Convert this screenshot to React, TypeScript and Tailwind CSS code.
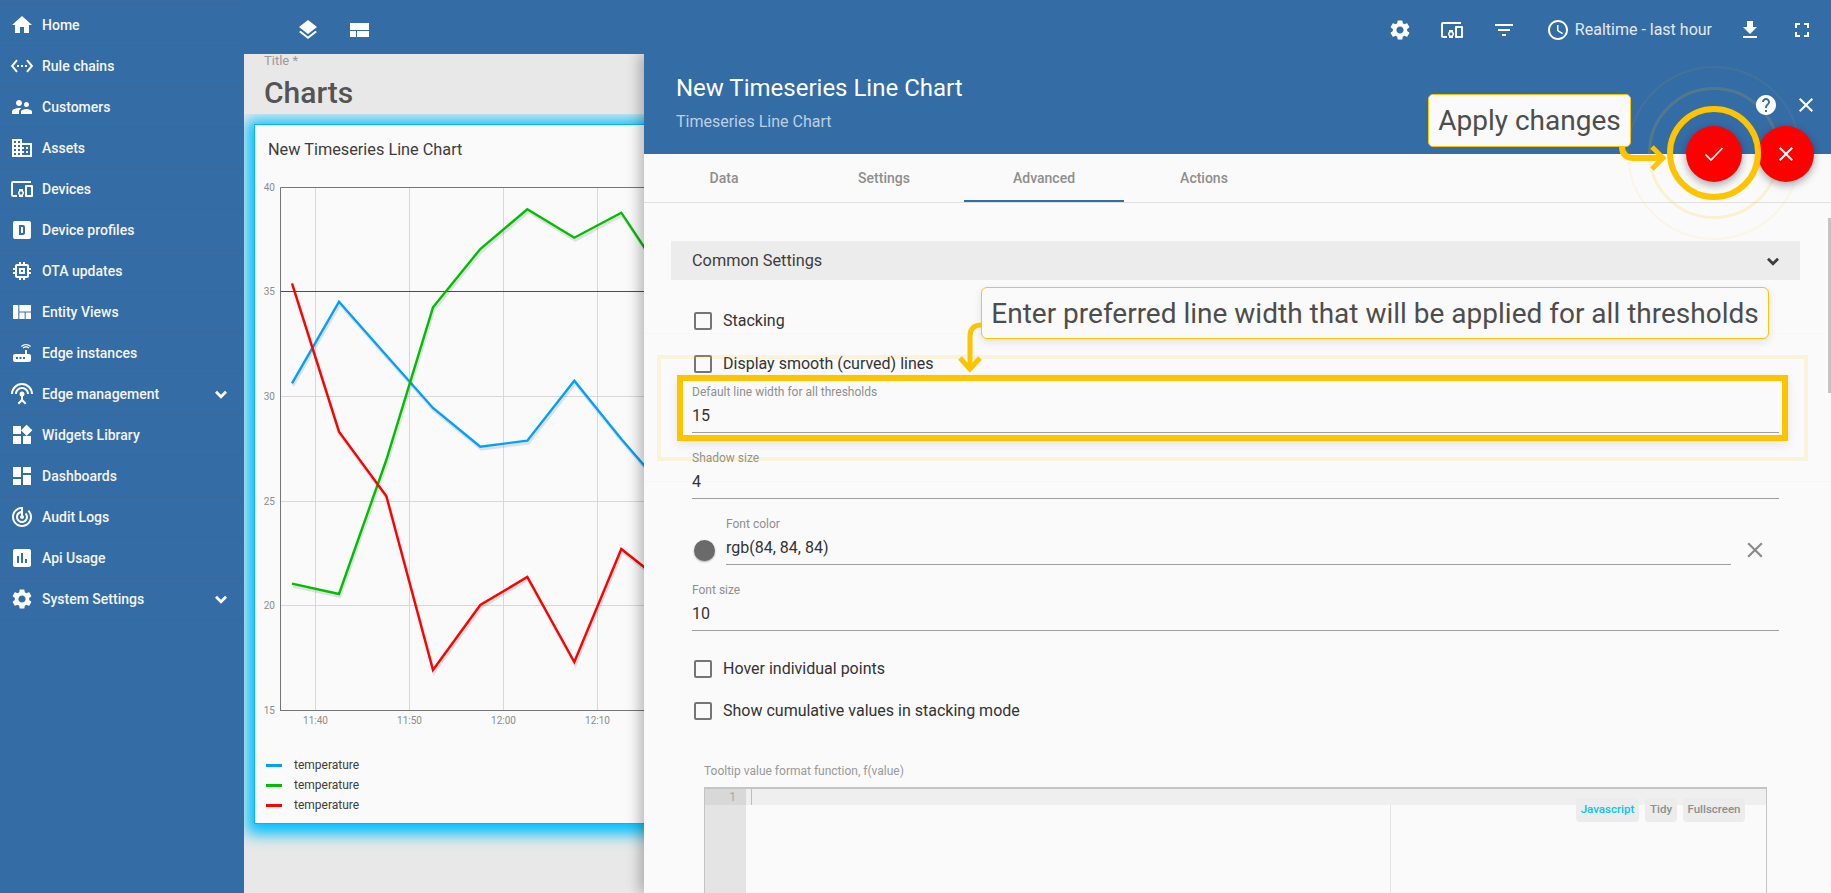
import { ReactNode } from 'react';
import {
  MdAccessTime,
  MdAssessment,
  MdClose,
  MdDashboard,
  MdDevicesOther,
  MdDomain,
  MdFilterList,
  MdFullscreen,
  MdGetApp,
  MdHelp,
  MdHome,
  MdLayers,
  MdMemory,
  MdRouter,
  MdSettings,
  MdSettingsEthernet,
  MdSettingsInputAntenna,
  MdSupervisorAccount,
  MdTrackChanges,
  MdViewQuilt,
  MdWidgets,
} from 'react-icons/md';

function DeviceProfileIcon() {
  return (
    <svg width="24" height="24" viewBox="0 0 24 24" fill="currentColor">
      <path
        fillRule="evenodd"
        d="M9 7v10h4a2 2 0 0 0 2-2V9a2 2 0 0 0-2-2H9zm2 2h2v6h-2V9zM5 3h14a2 2 0 0 1 2 2v14a2 2 0 0 1-2 2H5a2 2 0 0 1-2-2V5a2 2 0 0 1 2-2z"
      />
    </svg>
  );
}

function LayoutIcon() {
  return (
    <svg width="24" height="24" viewBox="0 0 24 24" fill="currentColor">
      <path d="M2 5h19v7H2zM2 13h6v6H2zM9 13h12v6H9z" />
    </svg>
  );
}

function Chevron({ className = '' }: { className?: string }) {
  return (
    <svg width="24" height="24" viewBox="0 0 24 24" fill="none" stroke="currentColor" strokeWidth="2.800" className={className}>
      <path d="M7 9.800l5 5 5-5" />
    </svg>
  );
}

const menu: { label: string; icon: ReactNode; more?: boolean }[] = [
  { label: 'Home', icon: <MdHome size={24} /> },
  { label: 'Rule chains', icon: <MdSettingsEthernet size={24} /> },
  { label: 'Customers', icon: <MdSupervisorAccount size={24} /> },
  { label: 'Assets', icon: <MdDomain size={24} /> },
  { label: 'Devices', icon: <MdDevicesOther size={24} /> },
  { label: 'Device profiles', icon: <DeviceProfileIcon /> },
  { label: 'OTA updates', icon: <MdMemory size={24} /> },
  { label: 'Entity Views', icon: <MdViewQuilt size={24} /> },
  { label: 'Edge instances', icon: <MdRouter size={24} /> },
  { label: 'Edge management', icon: <MdSettingsInputAntenna size={24} />, more: true },
  { label: 'Widgets Library', icon: <MdWidgets size={24} /> },
  { label: 'Dashboards', icon: <MdDashboard size={24} /> },
  { label: 'Audit Logs', icon: <MdTrackChanges size={24} /> },
  { label: 'Api Usage', icon: <MdAssessment size={24} /> },
  { label: 'System Settings', icon: <MdSettings size={24} />, more: true },
];

function Sidebar() {
  return (
    <aside className="w-[244px] shrink-0 bg-[#346ca6] pt-[4px] text-[#f5f5f5]">
      <div className="border-t border-[#39689b]">
        {menu.map((item) => (
          <div key={item.label} className="flex h-[41px] items-center border-b border-[#39689b] pl-[10px] pr-[11px]">
            <span className="flex w-[24px] justify-center text-white">{item.icon}</span>
            <span className="ml-[8px] flex-1 text-[14px] font-medium">{item.label}</span>
            {item.more && <Chevron className="text-white" />}
          </div>
        ))}
      </div>
    </aside>
  );
}

function Toolbar() {
  return (
    <header className="flex h-[54px] shrink-0 items-center bg-[#346ca6] pt-[6px] text-white">
      <div className="ml-[52px] flex gap-[28px]">
        <MdLayers size={24} />
        <LayoutIcon />
      </div>
      <div className="ml-auto mr-[17px] flex items-center">
        <MdSettings size={24} />
        <MdDevicesOther size={24} className="ml-[28px]" />
        <MdFilterList size={24} className="ml-[28px]" />
        <MdAccessTime size={24} className="ml-[30px]" />
        <span className="ml-[5px] text-[16px] text-[#e3e9f1]">Realtime - last hour</span>
        <MdGetApp size={24} className="ml-[26px]" />
        <MdFullscreen size={24} className="ml-[28px]" />
      </div>
    </header>
  );
}

const gridX = [315.5, 409.5, 503.5, 597.5, 691.5];
const gridY = [396.5, 501.5, 605.5];
const timeLabels = ['11:40', '11:50', '12:00', '12:10', '12:20'];

const series = [
  {
    color: '#00a0ff',
    points: '292,383.300 339,301.700 386,355 433,408 480.300,446.700 527.300,440.700 574.300,380.700 621.300,439 668,493',
  },
  {
    color: '#00bf00',
    points: '292,583.700 339,594 386.300,460 433,307.300 480.300,249 527.300,209.300 574.300,237.700 621.300,212.700 668,283',
  },
  {
    color: '#ff0000',
    points: '292,283.300 339,431.700 386.300,496 433,670 480.300,605 527.300,577 574.300,662 621.300,549 668,586',
  },
];

function LineChart() {
  return (
    <svg width="800" height="580" viewBox="255 170 800 580" className="block">
      {gridX.map((x) => (
        <line key={x} x1={x} x2={x} y1={187} y2={710} stroke="#d8d8d8" strokeWidth="1" />
      ))}
      {gridY.map((y) => (
        <line key={y} x1={281} x2={1055} y1={y} y2={y} stroke="#d8d8d8" strokeWidth="1" />
      ))}
      <line x1={281} x2={1055} y1={291.5} y2={291.5} stroke="#d01515" strokeWidth="1" />
      <path d="M280.500 711V187.500H1055M280.500 710.500H1055" fill="none" stroke="#757575" strokeWidth="1" />
      {series.map((s) => (
        <g key={s.color} fill="none" strokeLinejoin="miter">
          <polyline points={s.points} stroke="rgba(0,0,0,0.1)" strokeWidth="3" transform="translate(1 2.5)" />
          <polyline points={s.points} stroke={s.color} strokeWidth="2.4" />
        </g>
      ))}
      <g fontSize="10" fill="#8c8c8c" fontFamily="Roboto, sans-serif">
        {[
          [40, 191],
          [35, 295],
          [30, 400],
          [25, 505],
          [20, 609],
          [15, 714],
        ].map(([v, y]) => (
          <text key={v} x={275} y={y} textAnchor="end">
            {v}
          </text>
        ))}
        {timeLabels.map((t, i) => (
          <text key={t} x={gridX[i]} y={724} textAnchor="middle">
            {t}
          </text>
        ))}
      </g>
    </svg>
  );
}

function WidgetCard() {
  const legend = ['#00a0ff', '#00bf00', '#ff0000'];
  return (
    <div className="h-[700px] w-[800px] border border-[#00b8ff] bg-[#fafafa] shadow-[0_3px_14px_7px_#00bfff]">
      <div className="flex h-[45px] items-end pb-[8px] pl-[13px] text-[16.3px] leading-[24px] text-[#3d3d3d]">
        New Timeseries Line Chart
      </div>
      <LineChart />
      <div className="mt-[5px] pl-[11px]">
        {legend.map((color) => (
          <div key={color} className="flex h-[20px] items-center">
            <span className="h-[3px] w-[16px]" style={{ backgroundColor: color }} />
            <span className="ml-[12px] text-[12px] text-[#3d3d3d]">temperature</span>
          </div>
        ))}
      </div>
    </div>
  );
}

function Checkbox({ label, className }: { label: string; className: string }) {
  return (
    <div className={`flex h-[24px] items-center pl-[2px] ${className}`}>
      <span className="h-[18px] w-[18px] rounded-[2px] border-2 border-[#757575]" />
      <span className="ml-[11px] text-[16px] text-[#333]">{label}</span>
    </div>
  );
}

function Field({ label, value, className = '' }: { label: string; value: string; className?: string }) {
  return (
    <div className={`h-[48px] ${className}`}>
      <div className="h-[14px] text-[12px] leading-[14px] text-[#8f8f8f]">{label}</div>
      <div className="mt-[5px] h-[24px] text-[16px] leading-[24px] text-[#333]">{value}</div>
      <div className="mt-[4px] h-px bg-[#9e9e9e]" />
    </div>
  );
}

function CodeEditor() {
  return (
    <div className="relative mx-[12px] mt-[9px] flex h-[120px] border border-t-2 border-[#c4c4c4] bg-[#fafafa]">
      <div className="w-[41px] bg-[#e4e4e4]">
        <div className="h-[16px] bg-[#d8d8d8] pr-[10px] text-right text-[12px] leading-[16px] text-[#a8a8a8]">1</div>
      </div>
      <div className="relative flex-1">
        <div className="h-[16px] bg-[#efefef]">
          <div className="ml-[5px] h-full w-px bg-[#bdbdbd]" />
        </div>
        <div className="ml-[644px] h-full w-px bg-[#e4e4e4]" />
      </div>
      <div className="absolute right-[21px] top-[9px] flex items-start gap-[6px] text-[11.5px] font-medium text-[#8f8f8f]">
        <span className="flex h-[24px] w-[63px] items-center justify-center rounded-[4px] bg-[#ececec] text-[#00c8e6]">
          Javascript
        </span>
        <span className="flex h-[24px] w-[32px] items-center justify-center rounded-[4px] bg-[#ececec]">Tidy</span>
        <span className="flex h-[24px] w-[62px] items-center justify-center rounded-[4px] bg-[#ececec]">
          Fullscreen
        </span>
      </div>
    </div>
  );
}

function AdvancedForm() {
  return (
    <div className="mx-[27px] mt-[38px] w-[1129px] bg-[#fafafa] pb-[40px]">
      <div className="flex h-[39px] items-center justify-between bg-[#ececec] px-[21px] text-[#3d3d3d]">
        <span className="pt-[2px] text-[16.3px]">Common Settings</span>
        <Chevron className="mr-[-6px]" />
      </div>
      <div className="px-[21px]">
        <Checkbox label="Stacking" className="mt-[29px]" />
        <Checkbox label="Display smooth (curved) lines" className="mt-[19px]" />
        <Field label="Default line width for all thresholds" value="15" className="mt-[9px]" />
        <Field label="Shadow size" value="4" className="mt-[18px]" />
        <div className="mt-[18px] flex h-[48px]">
          <span className="ml-[2px] mt-[23px] h-[21px] w-[21px] rounded-full bg-[#6a6a6a] shadow-[0_1px_2px_rgba(0,0,0,0.35)]" />
          <Field label="Font color" value="rgb(84, 84, 84)" className="ml-[11px] flex-1" />
          <MdClose size={26} className="ml-[11px] mr-[11px] mt-[20px] text-[#8a8a8a]" />
        </div>
        <Field label="Font size" value="10" className="mt-[18px]" />
        <Checkbox label="Hover individual points" className="mt-[26px]" />
        <Checkbox label="Show cumulative values in stacking mode" className="mt-[18px]" />
        <div className="ml-[12px] mt-[41px] h-[14px] text-[12px] leading-[14px] text-[#999]">
          Tooltip value format function, f(value)
        </div>
        <CodeEditor />
      </div>
    </div>
  );
}

function EditPanel() {
  const tabs = ['Data', 'Settings', 'Advanced', 'Actions'];
  return (
    <div className="pointer-events-none absolute bottom-0 left-[244px] right-0 top-[54px] overflow-hidden">
      <section className="absolute bottom-0 left-[400px] right-0 top-0 overflow-hidden bg-[#fafafa] shadow-[-5px_0_12px_rgba(0,0,0,0.25)]">
        <div className="h-[100px] bg-[#346ca6] pl-[32px] pt-[19px]">
          <div className="text-[24px] leading-[30px] text-white">New Timeseries Line Chart</div>
          <div className="mt-[7px] text-[16px] leading-[24px] text-[#bcd0e4]">Timeseries Line Chart</div>
        </div>
        <div className="flex h-[49px] border-b border-[#e0e0e0]">
          {tabs.map((tab) => (
            <div
              key={tab}
              className={
                tab === 'Advanced'
                  ? 'flex w-[160px] items-center justify-center border-y-2 border-b-[#346ca6] border-t-transparent text-[14px] font-medium text-[#8e8e8e]'
                  : 'flex w-[160px] items-center justify-center border-y-2 border-transparent text-[14px] font-medium text-[#8e8e8e]'
              }
            >
              {tab}
            </div>
          ))}
        </div>
        <AdvancedForm />
        <div className="absolute right-0 top-[164px] h-[175px] w-[3px] bg-[#c4c4c4]" />
      </section>
    </div>
  );
}

/* tutorial annotations drawn over the page */
function Annotations() {
  return (
    <>
      <div className="pointer-events-none absolute left-[1714px] top-[153px] h-0 w-0">
        <span className="absolute left-[-87px] top-[-87px] h-[174px] w-[174px] rounded-full border-2 border-[#ffc40014]" />
        <span className="absolute left-[-66px] top-[-66px] h-[132px] w-[132px] rounded-full border-[3px] border-[#ffc40026]" />
      </div>

      <div className="absolute left-[1686px] top-[126px] flex h-[56px] w-[56px] items-center justify-center rounded-full bg-[#ff0000] text-white shadow-[0_3px_8px_rgba(0,0,0,0.35)]">
        <svg width="24" height="24" viewBox="0 0 24 24" fill="none" stroke="currentColor" strokeWidth="1.7">
          <path d="M3.500 12.500l5.500 5.500L20.500 6" />
        </svg>
      </div>
      <div className="absolute left-[1758px] top-[126px] flex h-[56px] w-[56px] items-center justify-center rounded-full bg-[#ff0000] text-white shadow-[0_3px_8px_rgba(0,0,0,0.35)]">
        <MdClose size={24} />
      </div>
      <span className="pointer-events-none absolute left-[1667px] top-[106px] h-[94px] w-[94px] rounded-full border-[6px] border-[#ffc400]" />

      <MdHelp size={24} className="absolute left-[1754px] top-[93px] text-white" />
      <MdClose size={24} className="absolute left-[1794px] top-[93px] text-white" />

      <div className="absolute left-[1428px] top-[94px] flex h-[53px] w-[203px] items-center justify-center rounded-[5px] border border-[#ffc400] bg-[#fafafa] text-[28px] text-[#4d4d4d]">
        Apply changes
      </div>
      <svg width="60" height="30" viewBox="0 0 60 30" className="absolute left-[1615px] top-[144px]" fill="none" stroke="#ffc400">
        <path d="M7 2c0 8 4 12 12 12h28" strokeWidth="6" />
        <path d="M37 3l11 11-11 11" strokeWidth="5" />
      </svg>

      <div className="pointer-events-none absolute left-[657px] top-[355px] h-[106px] w-[1151px] border-4 border-[#ffc4001f]" />
      <div className="pointer-events-none absolute left-[640px] top-[333px] h-[149px] w-[1191px] border-y border-[#ffc4000f]" />
      <div className="pointer-events-none absolute left-[677px] top-[375px] h-[66px] w-[1111px] border-[6px] border-[#ffc400] shadow-[0_4px_10px_rgba(0,0,0,0.08)]" />

      <div className="absolute left-[981px] top-[287px] flex h-[52px] w-[788px] items-center justify-center rounded-[6px] border border-[#ffc400] bg-[#fafafa] pt-[1px] text-[28px] text-[#4d4d4d] shadow-[0_3px_8px_rgba(0,0,0,0.1)]">
        Enter preferred line width that will be applied for all thresholds
      </div>
      <svg width="30" height="54" viewBox="0 0 30 54" className="absolute left-[955px] top-[322px]" fill="none" stroke="#ffc400">
        <path d="M26 3c-7 0-11 4-11 11v32" strokeWidth="5" />
        <path d="M5 36l10 11 10-11" strokeWidth="5" />
      </svg>
    </>
  );
}

export default function App() {
  return (
    <div className="relative flex h-[893px] w-[1831px] overflow-hidden bg-[#e8e8e8] font-['Roboto',sans-serif]">
      <Sidebar />
      <main className="flex min-w-0 flex-1 flex-col">
        <Toolbar />
        <div className="h-[60px] shrink-0 pl-[20px]">
          <div className="text-[13px] leading-[13px] text-[#9a9a9a]">Title *</div>
          <div className="mt-[6px] text-[30px] font-medium leading-[40px] text-[#545454]">Charts</div>
        </div>
        <div className="flex-1 overflow-hidden pl-[10px] pt-[10px]">
          <WidgetCard />
        </div>
      </main>
      <EditPanel />
      <Annotations />
    </div>
  );
}
